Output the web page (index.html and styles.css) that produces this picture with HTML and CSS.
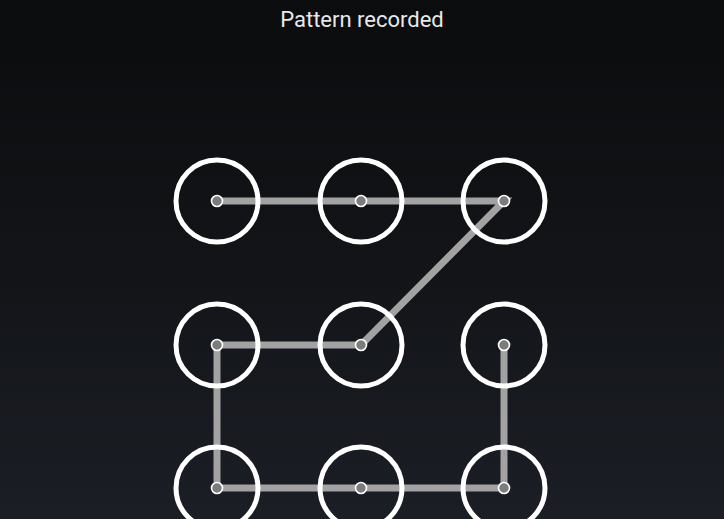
FILE: index.html
```html
<!DOCTYPE html>
<html>
<head>
<meta charset="utf-8">
<link rel="stylesheet" href="styles.css">
</head>
<body>
<div class="screen">
  <div class="title">Pattern recorded</div>
  <svg class="pattern" viewBox="0 40 724 479" width="724" height="479">
    <polyline class="path" points="217,201 504,201 361,345 217,345 217,488 504,488 504,345"/>
    <g class="rings">
      <circle cx="217" cy="201" r="41"/><circle cx="361" cy="201" r="41"/><circle cx="504" cy="201" r="41"/>
      <circle cx="217" cy="345" r="41"/><circle cx="361" cy="345" r="41"/><circle cx="504" cy="345" r="41"/>
      <circle cx="217" cy="488" r="41"/><circle cx="361" cy="488" r="41"/><circle cx="504" cy="488" r="41"/>
    </g>
    <g class="dots">
      <circle cx="217" cy="201" r="5.5"/><circle cx="361" cy="201" r="5.5"/><circle cx="504" cy="201" r="5.5"/>
      <circle cx="217" cy="345" r="5.5"/><circle cx="361" cy="345" r="5.5"/><circle cx="504" cy="345" r="5.5"/>
      <circle cx="217" cy="488" r="5.5"/><circle cx="361" cy="488" r="5.5"/><circle cx="504" cy="488" r="5.5"/>
    </g>
  </svg>
</div>
</body>
</html>
```
FILE: styles.css
```css
html, body {
  margin: 0;
  padding: 0;
  width: 724px;
  height: 519px;
  overflow: hidden;
}
.screen {
  width: 724px;
  height: 519px;
  display: flex;
  flex-direction: column;
  background: linear-gradient(to bottom, #0b0c0e 0%, #111316 45%, #1b1e25 100%);
}
.title {
  height: 40px;
  line-height: 40px;
  text-align: center;
  font-family: Roboto, "Noto Sans", sans-serif;
  font-size: 22px;
  color: #e8e8e8;
}
.pattern {
  display: block;
}
.path {
  fill: none;
  stroke: #a2a2a2;
  stroke-width: 7;
  stroke-linejoin: miter;
  stroke-linecap: butt;
}
.rings circle {
  fill: none;
  stroke: #ffffff;
  stroke-width: 5;
}
.dots circle {
  fill: #7c7c7c;
  stroke: #ffffff;
  stroke-width: 1.6;
}
```
